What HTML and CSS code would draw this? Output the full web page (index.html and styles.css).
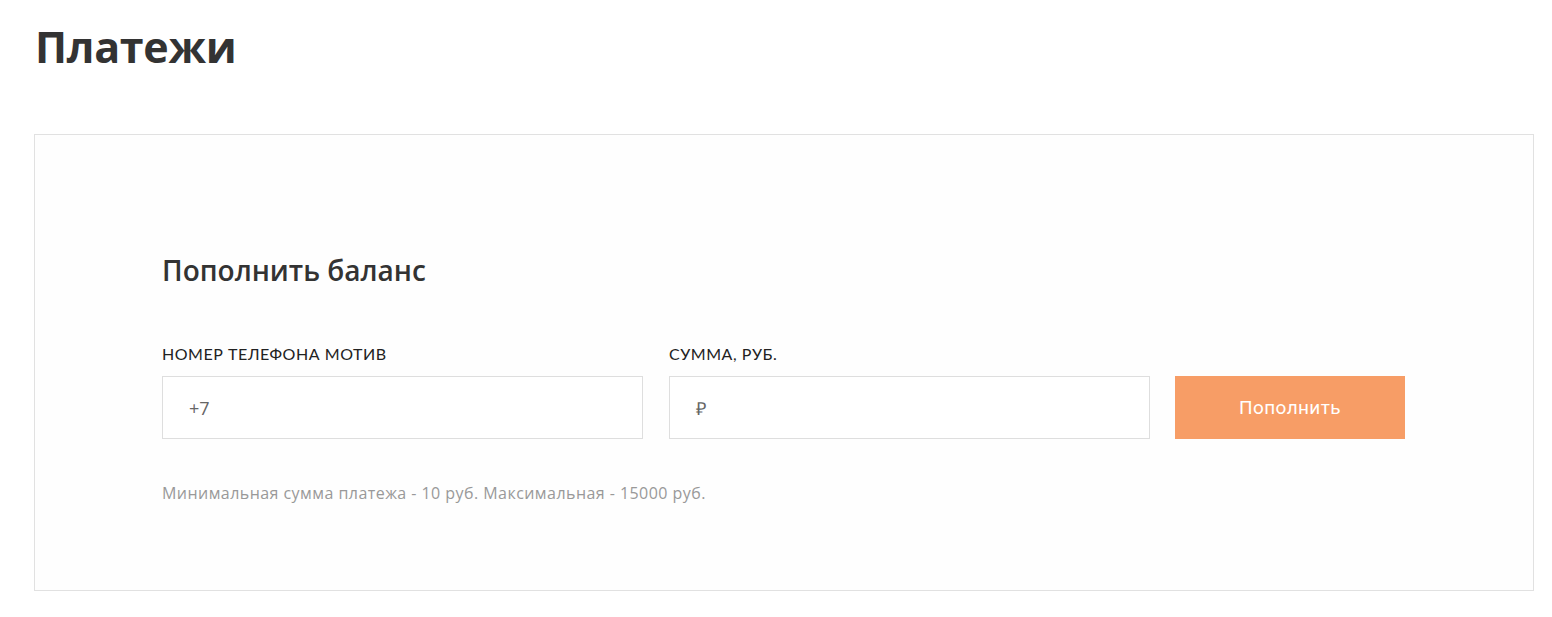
FILE: index.html
```html
<!DOCTYPE html>
<html lang="ru">
<head>
<meta charset="utf-8">
<title>Платежи</title>
<link rel="stylesheet" href="styles.css">
</head>
<body>
<main class="page">
  <h1 class="title">Платежи</h1>
  <section class="card">
    <h2 class="card-title">Пополнить баланс</h2>
    <form class="form">
      <div class="field field-phone">
        <label class="label">НОМЕР ТЕЛЕФОНА МОТИВ</label>
        <div class="input">+7</div>
      </div>
      <div class="field field-sum">
        <label class="label">СУММА, РУБ.</label>
        <div class="input">₽</div>
      </div>
      <div class="field field-btn">
        <button type="button" class="btn">Пополнить</button>
      </div>
    </form>
    <p class="hint">Минимальная сумма платежа - 10 руб. Максимальная - 15000 руб.</p>
  </section>
</main>
</body>
</html>
```

FILE: styles.css
```css
* { box-sizing: border-box; }
html, body { margin: 0; padding: 0; background: #fff; }
body { font-family: "Open Sans", sans-serif; color: #333; }
.page { padding: 18px 18px 0 34px; }
.title {
  margin: 0 0 0 1px;
  font-family: "Open Sans", sans-serif;
  font-weight: 700;
  font-size: 43px;
  line-height: 58px;
  color: #333;
  letter-spacing: -0.3px;
}
.card {
  margin-top: 58px;
  border: 1px solid #e1e1e1;
  background: #fefefe;
  padding: 115px 127px 0 127px;
  height: 457px;
}
.card-title {
  margin: 0;
  font-family: "Open Sans", sans-serif;
  font-weight: 600;
  font-size: 28px;
  line-height: 40px;
  color: #333;
}
.form {
  display: flex;
  align-items: flex-end;
  gap: 26px;
  margin-top: 54px;
}
.field { display: flex; flex-direction: column; }
.field-phone { width: 481px; }
.field-sum { width: 481px; }
.field-btn { width: 230px; margin-left: -1px; }
.label {
  font-family: Lato, sans-serif;
  font-size: 16px;
  letter-spacing: 0.55px;
  line-height: 20px;
  color: #222;
  margin-bottom: 12px;
}
.input {
  height: 63px;
  border: 1px solid #dedede;
  background: #fff;
  padding: 0 26px;
  display: flex;
  align-items: center;
  font-family: "Open Sans", sans-serif;
  font-size: 18px;
  color: #666;
}
.btn {
  height: 63px;
  width: 230px;
  border: 0;
  background: #f79d66;
  color: #fff;
  font-family: Roboto, sans-serif;
  font-size: 19px;
  letter-spacing: 0.4px;
  padding: 0;
  cursor: pointer;
}
.hint {
  margin: 44px 0 0 0;
  font-family: "Open Sans", sans-serif;
  font-size: 16px;
  letter-spacing: 0.45px;
  line-height: 20px;
  color: #999;
}
```
